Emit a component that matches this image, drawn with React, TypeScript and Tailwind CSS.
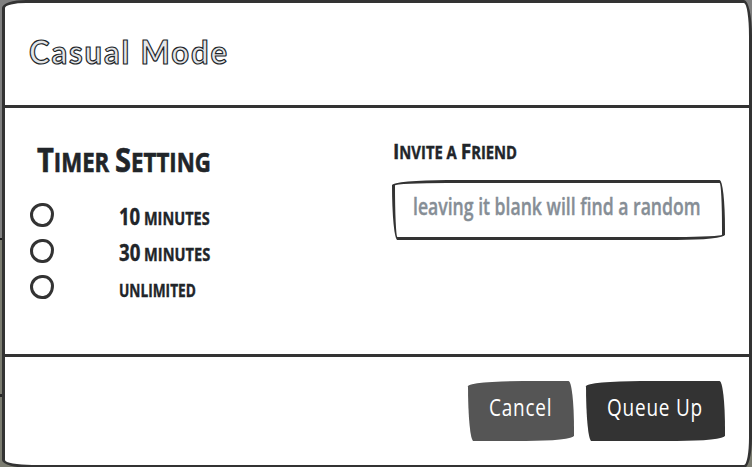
const sketch = 'rounded-[255px_25px_225px_25px/25px_225px_25px_255px]';

const options = [
  { first: '10', rest: ' minutes', fit: 'scale-x-[0.805] top-[2px]' },
  { first: '30', rest: ' minutes', fit: 'scale-x-[0.81] top-[2px]' },
  { first: '', rest: 'unlimited', fit: 'scale-x-[0.76] top-[2px]' },
];

function Backdrop() {
  return (
    <div className="absolute inset-0 -z-10 flex flex-col">
      <div className="h-[238px] bg-[#808080]" />
      <div className="h-[2px] bg-[#1a1a1a]" />
      <div className="h-[154px] bg-[#7b7c70]" />
      <div className="h-[3px] bg-[#292929]" />
      <div className="flex-1 bg-[#7b7c70]" />
    </div>
  );
}

export default function App() {
  return (
    <div className="relative isolate h-[467px] w-[752px] overflow-hidden pl-[2px] font-['Open_Sans',sans-serif] text-[#212529]">
      <Backdrop />
      <div className="flex h-[468px] w-[750px] flex-col rounded-[24px_8px_8px_30px/8px_36px_30px_8px] border-[3px] border-[#333] bg-white">
        <header className="flex h-[105px] shrink-0 items-center border-b-[3px] border-[#333] px-6">
          <h1 className="-mt-[6px] origin-left scale-x-[0.94] whitespace-nowrap font-['Lato',sans-serif] text-[33px] leading-none font-bold tracking-[2px] text-[#e4e6e8] [-webkit-text-stroke:1.2px_#212529]">
            Casual Mode
          </h1>
        </header>
        <main className="flex h-[249px] shrink-0 border-b-[3px] border-[#333] px-6">
          <section className="w-[363px] pt-[31px]">
            <h2 className="ml-2 h-[40px] origin-left scale-x-[0.855] whitespace-nowrap text-[26px] leading-[40px] font-bold uppercase [-webkit-text-stroke:0.6px_#212529]">
              <span className="text-[34px]">T</span>imer <span className="text-[34px]">S</span>etting
            </h2>
            <div className="mt-[18px] flex flex-col gap-3 pt-[6px]">
              {options.map((o) => (
                <label key={o.first + o.rest} className="flex h-6 items-center">
                  <input
                    type="radio"
                    name="timer"
                    className="m-0 ml-px size-6 shrink-0 appearance-none rounded-[50%_45%_45%_50%/50%_45%_55%_50%] border-[3px] border-[#333]"
                  />
                  <span className={`relative ml-[65px] origin-left whitespace-pre text-[18px] leading-6 font-bold uppercase [-webkit-text-stroke:0.4px_#212529] ${o.fit}`}>
                    <span className="text-[23px]">{o.first}</span>
                    {o.rest}
                  </span>
                </label>
              ))}
            </div>
          </section>
          <section className="w-[333px] pt-[30px]">
            <h3 className="ml-px h-6 origin-left scale-x-[0.87] whitespace-nowrap text-[17px] leading-6 font-bold uppercase [-webkit-text-stroke:0.4px_#212529]">
              <span className="text-[22px]">I</span>nvite a <span className="text-[22px]">F</span>riend
            </h3>
            <div className={`mt-[18px] flex h-[60px] w-[333px] items-center border-[3px] border-[#333] pl-[18px] ${sketch}`}>
              <span className="-mt-[8px] origin-left scale-x-[0.734] whitespace-nowrap text-[24px] leading-none font-semibold text-[#868e96] [-webkit-text-stroke:0.4px_#868e96]">
                leaving it blank will find a random
              </span>
            </div>
          </section>
        </main>
        <footer className="flex flex-1 justify-end gap-3 pt-6 pr-6">
          <button className={`flex h-[60px] w-[106px] items-center bg-[#555] pl-[21px] text-white ${sketch}`}>
            <span className="-mt-[9px] origin-left scale-x-[0.79] whitespace-nowrap text-[24px] leading-none tracking-[1px]">
              Cancel
            </span>
          </button>
          <button className={`flex h-[60px] w-[139px] items-center bg-[#333] pl-[21px] text-white ${sketch}`}>
            <span className="-mt-[9px] origin-left scale-x-[0.79] whitespace-nowrap text-[24px] leading-none tracking-[1px]">
              Queue Up
            </span>
          </button>
        </footer>
      </div>
    </div>
  );
}
